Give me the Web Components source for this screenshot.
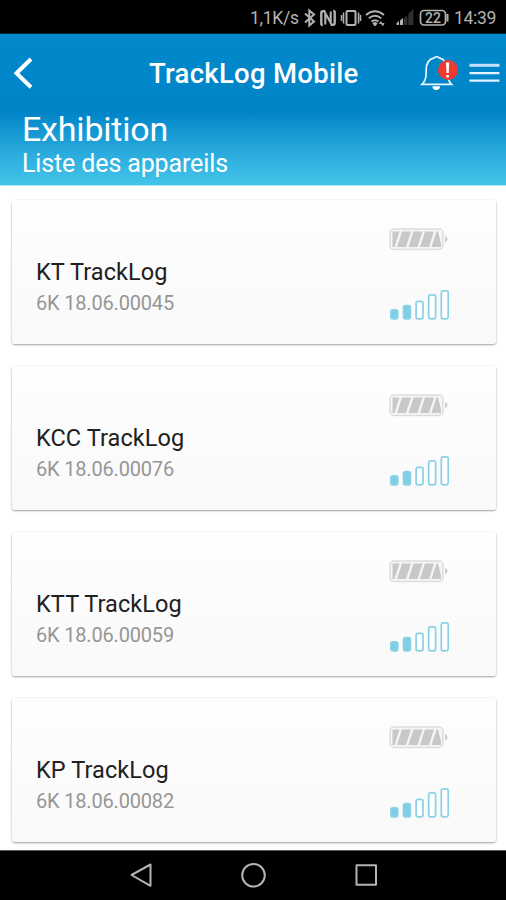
<!DOCTYPE html>
<html lang="fr">
<head>
<meta charset="utf-8">
<title>TrackLog Mobile</title>
<style>
html, body { margin: 0; height: 100%; background: #fff; }
body { font-family: Roboto, "Liberation Sans", sans-serif; overflow: hidden; }
</style>
</head>
<body>
<track-app></track-app>
<script>
const define = (name, html, setup) => {
  const tpl = document.createElement('template');
  tpl.innerHTML = '<style>*{box-sizing:border-box}svg{display:block;flex:none}</style>' + html;
  customElements.define(name, class extends HTMLElement {
    constructor() {
      super();
      this.attachShadow({ mode: 'open' }).append(tpl.content.cloneNode(true));
    }
    connectedCallback() { if (setup) setup(this, this.shadowRoot); }
  });
};

define('status-bar', `
<style>
:host { display: flex; height: 34px; background: #000; color: #b2b2b2; padding: 1px 10px 0 250px; align-items: center; font-size: 18px; line-height: 34px; white-space: nowrap; border-bottom: 1px solid #04273c; }
.rate { width: 53px; font-size: 17.5px; letter-spacing: -.25px; margin-top: 1px; }
.clock { margin-left: auto; font-size: 17.5px; letter-spacing: -.3px; margin-top: 1px; }
.level { font-size: 14px; fill: #b2b2b2; }
</style>
<span class="rate">1,1K/s</span>
<svg width="147" height="33" viewBox="303 1 147 33" fill="none" stroke="#b2b2b2" stroke-width="1.7">
  <path d="M305 13.500l9 8-4.700 4V10.500l4.700 4-9 8" stroke-width="2"/>
  <path d="M325.300 11.300h-2.300q-1.700 0-1.700 1.700v10.500q0 1.500 1.500 1.500M330.700 24.700h2.300q1.700 0 1.700-1.700V12.500q0-1.500-1.500-1.500" stroke-width="2.400"/>
  <path d="M325.300 24.500V13.200l5.400 9.600V11.500" stroke-width="2.100"/>
  <rect x="346.500" y="11" width="9" height="14" rx="1" stroke-width="2"/>
  <path d="M343.500 12.500v11M358.500 12.500v11M341.500 15v6M360.500 15v6" stroke-width="1.500"/>
  <path d="M366 15q9-7.500 18 0M368.800 18.300q6.200-5 12.400 0M371.500 21.500q3.500-2.600 7 0" stroke-width="2"/>
  <path d="M375 26l-2.200-2.700q2.200-1.500 4.400 0z" fill="#b2b2b2" stroke-width="1"/>
  <path d="M379.500 23.500l1.200-2 1.200 2zM381.500 23.500h2.600l-1.300 2.200z" fill="#b2b2b2" stroke-width=".8"/>
  <path d="M403.800 25V18.500l3.500-3V25zM408.300 25V14l5-5V25z" fill="#303030" stroke="none"/>
  <path d="M396.500 25v-2l2.500-2V25zM400 25v-4.500l3-2.500v7z" fill="#b2b2b2" stroke="none"/>
  <rect x="420.500" y="10.500" width="25" height="14.500" rx="3.500" stroke-width="1.700"/>
  <path d="M447.500 14v7.500" stroke-width="2"/>
  <text class="level" stroke="none" x="433" y="22.800" text-anchor="middle" font-weight="500">22</text>
</svg>
<span class="clock">14:39</span>`);

define('app-header', `
<style>
:host { display: block; height: 152px; color: #fff; background: linear-gradient(#0089cb 0, #0084c8 78px, #1598d3 98px, #2eafdf 124px, #43c5ea 151px); border-bottom: 1px solid #a5e4f5; }
nav { display: flex; align-items: center; height: 80px; padding: 0 6px 0 13px; }
h1 { flex: none; width: 209px; margin: 0 62px 0 116px; font-size: 27.500px; font-weight: 500; line-height: 80px; white-space: nowrap; letter-spacing: .28px; }
h2, p { margin: 0 0 0 22px; font-weight: 400; white-space: nowrap; }
h2 { font-size: 34px; line-height: 36px; margin-top: -3px; letter-spacing: -.2px; }
p { font-size: 25px; line-height: 34px; letter-spacing: -.13px; }
</style>
<nav>
  <svg width="20" height="34" viewBox="13 57 20 34"><path d="M31 59L16.500 73.300l14.500 14" fill="none" stroke="#fff" stroke-width="4"/></svg>
  <h1><slot name="title"></slot></h1>
  <svg width="80" height="40" viewBox="420 54 80 40">
    <path d="M422 84.300h29.500c-4-3.500-4.500-8-4.500-14.500 0-6.500-3-11-7.800-12q-2.500-2.500-5 0c-5 1-8 5.500-8 12 0 6.500-.2 11-4.200 14.500z" fill="none" stroke="#e9f7ff" stroke-width="1.700"/>
    <path d="M432.500 86.300h7.500a3.700 3.700 0 0 1-7.500 0z" fill="#fff"/>
    <circle cx="448" cy="70" r="10" fill="#ef3a30"/>
    <path d="M446 62.500h3.200l-.5 10.500h-2.200zM446.300 75h2.600v2.500h-2.600z" fill="#fff"/>
    <path d="M469.500 65.300h30" stroke="#c5e0fa" stroke-width="3"/>
    <path d="M469.500 73.100h30M469.500 80.700h30" stroke="#e2f2ff" stroke-width="2.200"/>
  </svg>
</nav>
<h2><slot name="section"></slot></h2>
<p><slot name="subtitle"></slot></p>`);

define('battery-icon', `
<style>:host { display: block; }</style>
<svg width="60" height="24" viewBox="0 0 60 24">
  <rect x="1" y="1" width="53" height="20.500" rx="4" fill="#f5f5f6" stroke="#dddddf" stroke-width="1.500"/>
  <path d="M56 8v6.500q2.500-.5 2.500-3.200T56 8z" fill="#ccc"/>
  <g fill="#c8c8cb"><path d="M3.500 3.500h7L5.500 19h-2zM13 3.500h9L17 19H8zM24.500 3.500h9L28.500 19h-9zM36 3.500h9L40 19h-9zM47.500 3.500h1.500l3 12V19h-9.500z"/></g>
</svg>`);

define('signal-icon', `
<style>:host { display: block; }</style>
<svg width="60" height="31" viewBox="0 0 60 31"><g stroke="#8ad1e5" stroke-width="1.700"></g></svg>`,
(host, root) => {
  const level = +host.getAttribute('level');
  const heights = [9, 13.2, 17.4, 24, 28];
  root.querySelector('g').innerHTML = heights.map((h, i) =>
    `<rect x="${1.9 + i * 12.6}" y="${29.8 - h}" width="6.900" height="${h}" rx="2" fill="${i < level ? '#80cee5' : '#fcfeff'}"/>`).join('');
});

define('device-card', `
<style>
:host { display: flex; justify-content: space-between; height: 144px; padding: 28px 47px 0 24px; border-radius: 3px; background: linear-gradient(#fefefe, #f9f9f9); box-shadow: 0 1px 2px rgba(0,0,0,.36), 0 0 2px rgba(0,0,0,.08); white-space: nowrap; }
.text { padding-top: 28px; }
.name { font-size: 23.500px; line-height: 32px; color: #202020; letter-spacing: .09px; }
.serial { font-size: 20px; line-height: 30px; color: #969696; letter-spacing: -.18px; }
.state { display: grid; align-content: start; gap: 37px; }
</style>
<div class="text"><div class="name"><slot></slot></div><div class="serial"><slot name="serial"></slot></div></div>
<div class="state"><battery-icon></battery-icon><signal-icon level="2"></signal-icon></div>`);

define('nav-bar', `
<style>:host { display: block; height: 50px; background: #000; border-top: 1px solid #5a5a5a; }</style>
<svg width="506" height="49" viewBox="0 851 506 49" fill="none" stroke="#b4b4b4" stroke-width="2" stroke-linejoin="round">
  <path d="M150.500 864.500v21.300L131.500 875z"/>
  <circle cx="253.500" cy="875.300" r="11.300"/>
  <rect x="356.500" y="865.300" width="19.500" height="19.500"/>
</svg>`);

define('track-app', `
<style>
:host { display: flex; flex-direction: column; width: 506px; height: 900px; overflow: hidden; }
main { flex: 1; min-height: 0; display: flex; flex-direction: column; gap: 22px; padding: 14px 10px 0 12px; background: #fff; }
status-bar, app-header, nav-bar, device-card { flex: none; }
</style>
<status-bar></status-bar>
<app-header><span slot="title">TrackLog Mobile</span><span slot="section">Exhibition</span><span slot="subtitle">Liste des appareils</span></app-header>
<main>
  <device-card>KT TrackLog<span slot="serial">6K 18.06.00045</span></device-card>
  <device-card>KCC TrackLog<span slot="serial">6K 18.06.00076</span></device-card>
  <device-card>KTT TrackLog<span slot="serial">6K 18.06.00059</span></device-card>
  <device-card>KP TrackLog<span slot="serial">6K 18.06.00082</span></device-card>
</main>
<nav-bar></nav-bar>`);
</script>
</body>
</html>
